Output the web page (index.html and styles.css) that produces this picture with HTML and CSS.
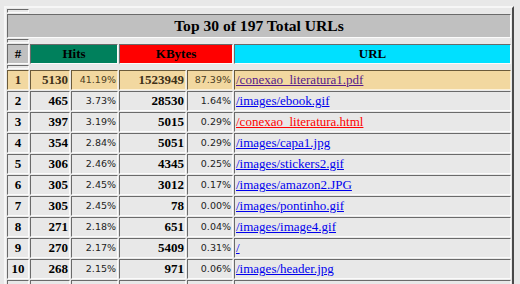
FILE: index.html
```html
<!DOCTYPE html>
<html>
<head>
<meta charset="utf-8">
<title>Top URLs</title>
<link rel="stylesheet" href="styles.css">
</head>
<body>
<table class="stats">
  <colgroup>
    <col class="c-rank"><col class="c-hits"><col class="c-hpct"><col class="c-kb"><col class="c-kpct"><col class="c-url">
  </colgroup>
  <tr class="spacer"><th class="gap"></th></tr>
  <tr><th colspan="6" class="title">Top 30 of 197 Total URLs</th></tr>
  <tr class="spacer"><th class="gap"></th></tr>
  <tr class="head">
    <th class="h-rank">#</th>
    <th colspan="2" class="h-hits">Hits</th>
    <th colspan="2" class="h-kb">KBytes</th>
    <th class="h-url">URL</th>
  </tr>
  <tr class="spacer"><th class="gap"></th></tr>
  <tr class="row hl"><td class="rank">1</td><td class="num">5130</td><td class="pct">41.19%</td><td class="num">1523949</td><td class="pct">87.39%</td><td class="url"><a class="visited" href="#">/conexao_literatura1.pdf</a></td></tr>
  <tr class="row"><td class="rank">2</td><td class="num">465</td><td class="pct">3.73%</td><td class="num">28530</td><td class="pct">1.64%</td><td class="url"><a href="#">/images/ebook.gif</a></td></tr>
  <tr class="row"><td class="rank">3</td><td class="num">397</td><td class="pct">3.19%</td><td class="num">5015</td><td class="pct">0.29%</td><td class="url"><a class="red" href="#">/conexao_literatura.html</a></td></tr>
  <tr class="row"><td class="rank">4</td><td class="num">354</td><td class="pct">2.84%</td><td class="num">5051</td><td class="pct">0.29%</td><td class="url"><a href="#">/images/capa1.jpg</a></td></tr>
  <tr class="row"><td class="rank">5</td><td class="num">306</td><td class="pct">2.46%</td><td class="num">4345</td><td class="pct">0.25%</td><td class="url"><a href="#">/images/stickers2.gif</a></td></tr>
  <tr class="row"><td class="rank">6</td><td class="num">305</td><td class="pct">2.45%</td><td class="num">3012</td><td class="pct">0.17%</td><td class="url"><a href="#">/images/amazon2.JPG</a></td></tr>
  <tr class="row"><td class="rank">7</td><td class="num">305</td><td class="pct">2.45%</td><td class="num">78</td><td class="pct">0.00%</td><td class="url"><a href="#">/images/pontinho.gif</a></td></tr>
  <tr class="row"><td class="rank">8</td><td class="num">271</td><td class="pct">2.18%</td><td class="num">651</td><td class="pct">0.04%</td><td class="url"><a href="#">/images/image4.gif</a></td></tr>
  <tr class="row"><td class="rank">9</td><td class="num">270</td><td class="pct">2.17%</td><td class="num">5409</td><td class="pct">0.31%</td><td class="url"><a href="#">/</a></td></tr>
  <tr class="row"><td class="rank">10</td><td class="num">268</td><td class="pct">2.15%</td><td class="num">971</td><td class="pct">0.06%</td><td class="url"><a href="#">/images/header.jpg</a></td></tr>
  <tr class="row"><td class="rank">&nbsp;</td><td class="num">&nbsp;</td><td class="pct">&nbsp;</td><td class="num">&nbsp;</td><td class="pct">&nbsp;</td><td class="url">&nbsp;</td></tr>
</table>
</body>
</html>
```
FILE: styles.css
```css
html, body {
  margin: 0;
  padding: 0;
  background: #e8e8e8;
}

body {
  padding: 6px 0 0 4px;
  font-family: "Liberation Serif", "Times New Roman", serif;
  color: #000;
}

.stats {
  width: 510px;
  table-layout: fixed;
  border-collapse: separate;
  border-spacing: 1px;
  border-style: solid;
  border-width: 2px;
  border-color: #f6f6f6 #4a4a4a #4a4a4a #f6f6f6;
  box-sizing: border-box;
}

.c-rank { width: 22px; }
.c-hits { width: 40px; }
.c-hpct { width: 47px; }
.c-kb { width: 67px; }
.c-kpct { width: 46px; }
.c-url { width: 277px; }

.stats th,
.stats td {
  box-sizing: border-box;
  border-style: solid;
  border-width: 1px;
  border-color: #6a6a6a #fbfbfb #fbfbfb #6a6a6a;
  padding: 0 1px;
  white-space: nowrap;
  overflow: hidden;
}

.spacer .gap {
  height: 4px;
  padding: 0;
  line-height: 0;
  font-size: 0;
}

.title {
  height: 24px;
  background: #c0c0c0;
  font-size: 15.6px;
  font-weight: bold;
  text-align: center;
  line-height: 18px;
}

.head th {
  height: 20px;
  font-size: 13px;
  font-weight: bold;
  text-align: center;
  line-height: 16px;
}

.h-rank { background: #c0c0c0; }
.h-hits { background: #00805c; }
.h-kb { background: #ff0000; }
.h-url { background: #00e0ff; }

.row td {
  height: 20px;
  line-height: 16px;
  vertical-align: middle;
}

.rank {
  text-align: center;
  font-weight: bold;
  font-size: 13px;
}

.num {
  text-align: right;
  font-weight: bold;
  font-size: 13px;
}

.pct {
  text-align: right;
  font-family: "DejaVu Sans", Verdana, sans-serif;
  font-size: 9.5px;
  color: #222;
}

.url {
  text-align: left;
  font-size: 13px;
}

.url a {
  color: #0000ee;
  text-decoration: underline;
}

.url a.visited { color: #551a8b; }
.url a.red { color: #ff0000; }

.hl td {
  background: #f2d8a0;
  color: #3e3018;
  border-color: #6a5a3a #fbf0d8 #fbf0d8 #6a5a3a;
}

.hl .pct { color: #4a3c22; }
```
